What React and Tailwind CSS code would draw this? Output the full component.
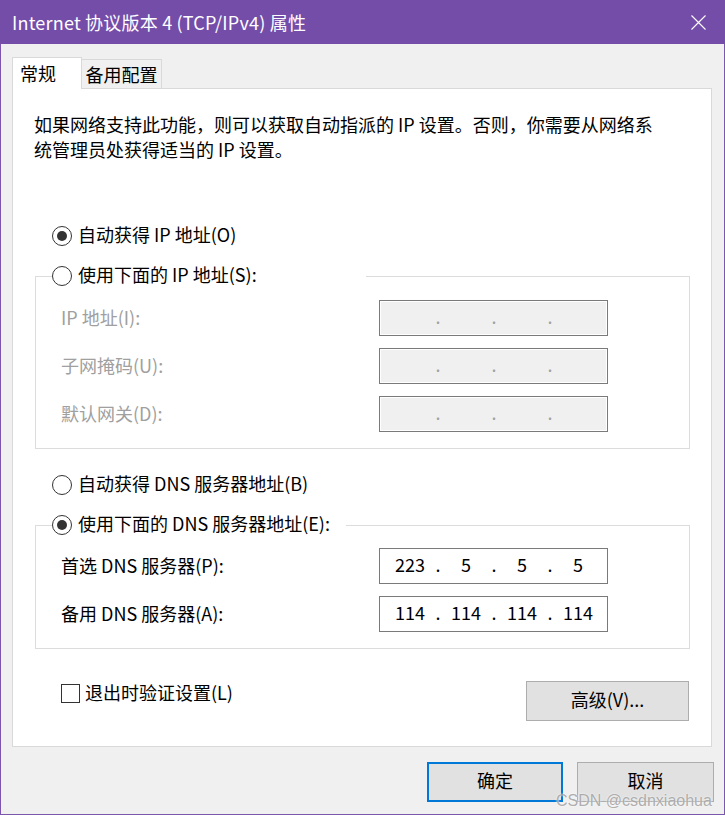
import React from 'react';

// Windows 风格单选按钮
const Radio = ({ checked = false }) => (
  <span className="w-[20px] h-[20px] shrink-0 rounded-full border border-[#333333] bg-white flex items-center justify-center">
    {checked && <span className="w-[10px] h-[10px] rounded-full bg-[#333333]" />}
  </span>
);

// IP 地址输入框
const IpField = ({ parts, disabled = false }) => (
  <div
    className={`flex items-center w-[229px] h-[36px] border border-[#7a7a7a] pl-[10px] pb-[4px] ${
      disabled ? 'bg-[#f0f0f0] text-[#a0a0a0] shadow-[inset_0_0_0_1px_#ffffff]' : 'bg-white text-black'
    }`}
  >
    {[0, 1, 2, 3].map((i) => (
      <React.Fragment key={i}>
        <span className="w-[40px] text-center">{parts ? parts[i] : ''}</span>
        {i < 3 && <span className="w-[16px] text-center">.</span>}
      </React.Fragment>
    ))}
  </div>
);

const FieldRow = ({ label, parts, disabled }) => (
  <div className="flex items-center pl-[25px] h-[36px]">
    <span className={`w-[318px] pb-[2px] ${disabled ? 'text-[#a0a0a0]' : 'text-black'}`}>{label}</span>
    <IpField parts={parts} disabled={disabled} />
  </div>
);

const Group = ({ legend, legendWidth, checked, children, className = '' }) => (
  <fieldset className={`ml-[22px] w-[655px] border border-[#dcdcdc] ${className}`}>
    <legend className={`ml-[16px] ${legendWidth} h-[26px] flex items-center gap-[6px] bg-white`}>
      <Radio checked={checked} />
      <span className="pb-[3px]">{legend}</span>
    </legend>
    {children}
  </fieldset>
);

const App = () => {
  return (
    <div className="relative w-[725px] h-[815px] flex flex-col bg-[#f0f0f0] text-[18px] leading-[25px] text-black font-['Noto_Sans_CJK_SC',sans-serif]">
      {/* 标题栏 */}
      <div className="h-[44px] shrink-0 bg-[#744da9] flex items-center justify-between pl-[12px] pr-[18px] text-white">
        <span className="tracking-[0.2px]">Internet 协议版本 4 (TCP/IPv4) 属性</span>
        <svg width="15" height="15" viewBox="0 0 15 15" className="mr-[1px]">
          <path d="M0.5 0.5 L14.5 14.5 M14.5 0.5 L0.5 14.5" stroke="#ffffff" strokeWidth="1.1" fill="none" />
        </svg>
      </div>

      <div className="flex-1 flex flex-col border-x border-b border-[#7b56ad] pl-[11px] pr-[12px]">
        {/* 选项卡 */}
        <div className="flex items-end h-[32px] mt-[13px]">
          <div className="relative z-10 h-[32px] w-[70px] bg-white border border-b-0 border-[#d9d9d9] pl-[7px] flex items-center">
            常规
          </div>
          <div className="h-[30px] w-[80px] border border-l-0 border-b-0 border-[#d9d9d9] flex items-center justify-center">
            备用配置
          </div>
        </div>

        {/* 选项卡内容 */}
        <div className="-mt-px h-[659px] shrink-0 bg-white border border-[#d9d9d9] flex flex-col">
          <p className="mt-[23px] pl-[21px]">
            如果网络支持此功能，则可以获取自动指派的 IP 设置。否则，你需要从网络系
            <br />
            统管理员处获得适当的 IP 设置。
          </p>

          <div className="mt-[61px] pl-[39px] h-[26px] flex items-center gap-[6px]">
            <Radio checked />
            <span className="pb-[3px]">自动获得 IP 地址(O)</span>
          </div>

          <Group legend="使用下面的 IP 地址(S):" legendWidth="w-[314px]" className="mt-[14px] pt-[11px] pb-[16px]">
            <div className="flex flex-col gap-[12px]">
              <FieldRow label="IP 地址(I):" disabled />
              <FieldRow label="子网掩码(U):" disabled />
              <FieldRow label="默认网关(D):" disabled />
            </div>
          </Group>

          <div className="mt-[23px] pl-[39px] h-[26px] flex items-center gap-[6px]">
            <Radio />
            <span className="pb-[3px]">自动获得 DNS 服务器地址(B)</span>
          </div>

          <Group legend="使用下面的 DNS 服务器地址(E):" legendWidth="w-[294px]" checked className="mt-[14px] pt-[10px] pb-[16px]">
            <div className="flex flex-col gap-[12px]">
              <FieldRow label="首选 DNS 服务器(P):" parts={['223', '5', '5', '5']} />
              <FieldRow label="备用 DNS 服务器(A):" parts={['114', '114', '114', '114']} />
            </div>
          </Group>

          <div className="mt-[32px] flex items-start justify-between pl-[48px] pr-[22px]">
            <div className="h-[24px] flex items-center gap-[5px]">
              <span className="w-[19px] h-[19px] border border-[#333333] bg-white" />
              <span className="pb-[2px]">退出时验证设置(L)</span>
            </div>
            <button className="w-[163px] h-[40px] bg-[#e1e1e1] border border-[#adadad] flex items-center justify-center pb-[3px]">
              高级(V)...
            </button>
          </div>
        </div>

        {/* 底部按钮 */}
        <div className="mt-[15px] flex justify-end gap-[14px] pr-[10px] -mr-[12px]">
          <button className="w-[136px] h-[40px] bg-[#e1e1e1] border-2 border-[#0078d7] flex items-center justify-center pb-[3px]">
            确定
          </button>
          <button className="w-[137px] h-[40px] bg-[#e1e1e1] border border-[#adadad] flex items-center justify-center pb-[3px]">
            取消
          </button>
        </div>
      </div>

      {/* 水印 */}
      <span className="absolute left-[556px] top-[793px] text-[16px] leading-[16px] text-[#9a9a9a]/80 font-['Liberation_Sans',sans-serif] [text-shadow:0_0_2px_#ffffff]">
        CSDN @csdnxiaohua
      </span>
    </div>
  );
};

export default App;
